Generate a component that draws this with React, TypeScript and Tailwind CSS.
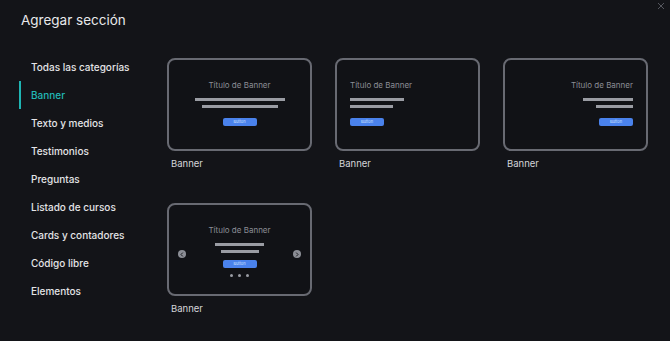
import React from 'react';

type Layout = 'center' | 'left' | 'right' | 'carousel';

const categories = [
  'Todas las categorías',
  'Banner',
  'Texto y medios',
  'Testimonios',
  'Preguntas',
  'Listado de cursos',
  'Cards y contadores',
  'Código libre',
  'Elementos',
];

const Preview: React.FC<{ layout: Layout }> = ({ layout }) => {
  if (layout === 'left' || layout === 'right') {
    const isLeft = layout === 'left';
    return (
      <div
        className={`h-full flex flex-col pt-[20px] ${
          isLeft ? 'items-start pl-[13px]' : 'items-end pr-[13px]'
        }`}
      >
        <div className="text-[8px] leading-[10px] text-[#8b8d95]">Título de Banner</div>
        <div className={`mt-[8px] h-[3px] bg-[#9a9ca3] ${isLeft ? 'w-[54px]' : 'w-[50px]'}`} />
        <div className={`mt-[4px] h-[3px] bg-[#9a9ca3] ${isLeft ? 'w-[43px]' : 'w-[37px]'}`} />
        <div className="mt-[10px] h-[8px] w-[34px] rounded-[2px] bg-[#4a82ec] flex items-center justify-center text-[4px] text-[#cfe0ff]">
          Button
        </div>
      </div>
    );
  }

  const carousel = layout === 'carousel';
  return (
    <div className="relative h-full flex flex-col items-center pt-[20px]">
      <div className="text-[8px] leading-[10px] text-[#8b8d95]">Título de Banner</div>
      <div className={`mt-[8px] h-[3px] bg-[#9a9ca3] ${carousel ? 'w-[49px]' : 'w-[90px]'}`} />
      <div className={`mt-[4px] h-[3px] bg-[#9a9ca3] ${carousel ? 'w-[38px]' : 'w-[76px]'}`} />
      <div
        className={`h-[8px] w-[34px] rounded-[2px] bg-[#4a82ec] flex items-center justify-center text-[4px] text-[#cfe0ff] ${
          carousel ? 'mt-[7px]' : 'mt-[10px]'
        }`}
      >
        Button
      </div>
      {carousel && (
        <>
          <div className="mt-[6px] flex gap-[5px]">
            <span className="h-[3px] w-[3px] rounded-full bg-[#9a9ca3]" />
            <span className="h-[3px] w-[3px] rounded-full bg-[#9a9ca3]" />
            <span className="h-[3px] w-[3px] rounded-full bg-[#9a9ca3]" />
          </div>
          <Arrow side="left" />
          <Arrow side="right" />
        </>
      )}
    </div>
  );
};

const Arrow: React.FC<{ side: 'left' | 'right' }> = ({ side }) => (
  <div
    className={`absolute top-[45px] h-[8px] w-[8px] rounded-full bg-[#8b8d95] flex items-center justify-center ${
      side === 'left' ? 'left-[9px]' : 'right-[9px]'
    }`}
  >
    <svg width="4" height="5" viewBox="0 0 4 5" fill="none">
      <path
        d={side === 'left' ? 'M2.8 0.6 L1 2.5 L2.8 4.4' : 'M1.2 0.6 L3 2.5 L1.2 4.4'}
        stroke="#1b1c20"
        strokeWidth="1"
      />
    </svg>
  </div>
);

const Tile: React.FC<{ layout: Layout }> = ({ layout }) => (
  <div className="flex flex-col">
    <div className="h-[93px] rounded-[8px] border-2 border-[#686a72] bg-[#111216]">
      <Preview layout={layout} />
    </div>
    <div className="mt-[6px] pl-[4px] text-[9.5px] leading-[14px] text-[#d4d4d8]">Banner</div>
  </div>
);

export default function App() {
  return (
    <div
      className="relative w-[670px] h-[341px] bg-[#131418] text-white overflow-hidden"
      style={{ fontFamily: 'Inter, "Noto Sans", sans-serif' }}
    >
      <button className="absolute right-[4px] top-[1px] text-[#55575e]">
        <svg width="10" height="10" viewBox="0 0 10 10" fill="none">
          <path d="M2 2 L8 8 M8 2 L2 8" stroke="currentColor" strokeWidth="1" />
        </svg>
      </button>

      <h2 className="pl-[21px] pt-[10px] text-[13.5px] leading-[20px] font-normal text-[#e8e8ea]">
        Agregar sección
      </h2>

      <div className="flex mt-[23px]">
        <nav className="w-[167px] pl-[19px] flex flex-col">
          {categories.map((c) => {
            const active = c === 'Banner';
            return (
              <div
                key={c}
                className={`h-[28px] flex items-center pl-[10px] border-l-2 text-[10px] font-medium ${
                  active ? 'border-[#1fb5b3] text-[#22b8b6]' : 'border-transparent text-[#e4e4e7]'
                }`}
              >
                {c}
              </div>
            );
          })}
        </nav>

        <div className="grid grid-cols-[145px_145px_145px] gap-x-[23px] gap-y-[32px] pt-[5px] h-fit">
          <Tile layout="center" />
          <Tile layout="left" />
          <Tile layout="right" />
          <Tile layout="carousel" />
        </div>
      </div>
    </div>
  );
}
